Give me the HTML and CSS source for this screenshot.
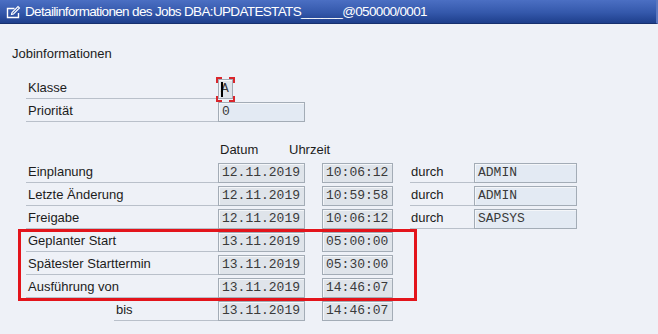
FILE: index.html
```html
<!DOCTYPE html>
<html lang="de">
<head>
    <meta charset="UTF-8">
    <title>Detailinformationen des Jobs</title>
    <link rel="stylesheet" href="styles.css">
</head>
<body>
    <div class="titlebar">
        <svg class="title-icon" width="17" height="15" viewBox="0 0 17 15">
            <path d="M9.5 3.5H2.5V12.5H13.5V8" fill="none" stroke="#fff" stroke-width="1.4"/>
            <path d="M6.5 9.5L7 7.5L13 1.5L14.5 3L8.5 9Z" fill="none" stroke="#fff" stroke-width="1.1"/>
        </svg>
        <span>Detailinformationen des Jobs DBA:UPDATESTATS______@050000/0001</span>
    </div>

    <div class="content">
        <div class="section-title">Jobinformationen</div>

        <div class="form">
            <div class="row">
                <div class="label">Klasse</div>
                <div class="field field-tiny">
                    <span class="cursor"></span>A
                    <svg class="focus-frame" width="19" height="25" viewBox="0 0 19 25">
                        <path d="M1 6V1H6M13 1H18V6M18 19V24H13M6 24H1V19" fill="none" stroke="#d9262c" stroke-width="2"/>
                    </svg>
                </div>
            </div>
            <div class="row">
                <div class="label">Priorität</div>
                <div class="field field-date field-light">0</div>
            </div>

            <div class="colhead">
                <span class="head-date">Datum</span>
                <span>Uhrzeit</span>
            </div>

            <div class="row">
                <div class="label">Einplanung</div>
                <div class="field field-date">12.11.2019</div>
                <div class="field field-time">10:06:12</div>
                <div class="label label-durch">durch</div>
                <div class="field field-name">ADMIN</div>
            </div>
            <div class="row">
                <div class="label">Letzte Änderung</div>
                <div class="field field-date">12.11.2019</div>
                <div class="field field-time">10:59:58</div>
                <div class="label label-durch">durch</div>
                <div class="field field-name">ADMIN</div>
            </div>
            <div class="row">
                <div class="label">Freigabe</div>
                <div class="field field-date">12.11.2019</div>
                <div class="field field-time">10:06:12</div>
                <div class="label label-durch">durch</div>
                <div class="field field-name">SAPSYS</div>
            </div>

            <div class="highlight">
                <div class="row">
                    <div class="label">Geplanter Start</div>
                    <div class="field field-date">13.11.2019</div>
                    <div class="field field-time">05:00:00</div>
                </div>
                <div class="row">
                    <div class="label">Spätester Starttermin</div>
                    <div class="field field-date">13.11.2019</div>
                    <div class="field field-time">05:30:00</div>
                </div>
                <div class="row">
                    <div class="label">Ausführung von</div>
                    <div class="field field-date">13.11.2019</div>
                    <div class="field field-time">14:46:07</div>
                </div>
            </div>

            <div class="row">
                <div class="label label-bis">bis</div>
                <div class="field field-date">13.11.2019</div>
                <div class="field field-time">14:46:07</div>
            </div>
        </div>
    </div>
</body>
</html>
```

FILE: styles.css
```css
html, body {
    margin: 0;
    height: 100%;
}
body {
    background-color: #eef1f7;
    font-family: "Liberation Sans", Arial, sans-serif;
    font-size: 13px;
    color: #1c1c1c;
    overflow: hidden;
}
.titlebar {
    height: 24px;
    box-sizing: border-box;
    display: flex;
    align-items: center;
    padding-left: 5px;
    background: linear-gradient(#4b6fc3, #3458ab 55%, #1e3f8c);
    border-bottom: 1px solid #17306e;
    border-right: 2px solid #5b78c0;
    color: #fff;
    font-size: 13.5px;
    letter-spacing: -0.65px;
}
.title-icon {
    margin-right: 3px;
    margin-top: 1px;
}
.section-title {
    margin: 22px 0 0 12px;
    line-height: 16px;
}
.form {
    margin: 16px 0 0 26px;
}
.row {
    display: flex;
    align-items: flex-start;
    height: 23px;
}
.label {
    width: 192px;
    height: 21px;
    box-sizing: border-box;
    padding-left: 2px;
    line-height: 20px;
    border-bottom: 1px solid #b9c0ca;
    white-space: nowrap;
}
.label-durch {
    width: 64px;
    margin-left: 17px;
    padding-left: 1px;
}
.label-bis {
    width: 104px;
    margin-left: 88px;
}
.field {
    position: relative;
    height: 20px;
    margin-top: 1px;
    box-sizing: border-box;
    padding-left: 3px;
    border: 1px solid #a3acb6;
    box-shadow: inset 1px 1px 0 #f4f6f9;
    background-color: #dfe4ea;
    font-family: "Liberation Mono", "Courier New", monospace;
    font-size: 13px;
    line-height: 18px;
    color: #3a3a3a;
}
.field-light,
.field-name {
    background-color: #e3eaf3;
}
.field-date {
    width: 87px;
}
.field-time {
    width: 71px;
    margin-left: 17px;
}
.field-name {
    width: 103px;
}
.field-tiny {
    width: 15px;
    padding-left: 2px;
}
.cursor {
    position: absolute;
    left: 2px;
    top: 2px;
    width: 2px;
    height: 15px;
    background-color: #000;
}
.focus-frame {
    position: absolute;
    left: -3px;
    top: -3px;
}
.colhead {
    display: flex;
    height: 20px;
    margin-top: 18px;
    padding-left: 194px;
    line-height: 16px;
}
.head-date {
    width: 69px;
}
.highlight {
    position: relative;
}
.highlight::after {
    content: "";
    position: absolute;
    left: -8px;
    top: -2px;
    bottom: -1px;
    width: 399px;
    box-sizing: border-box;
    border: 3px solid #e3141b;
}
```
